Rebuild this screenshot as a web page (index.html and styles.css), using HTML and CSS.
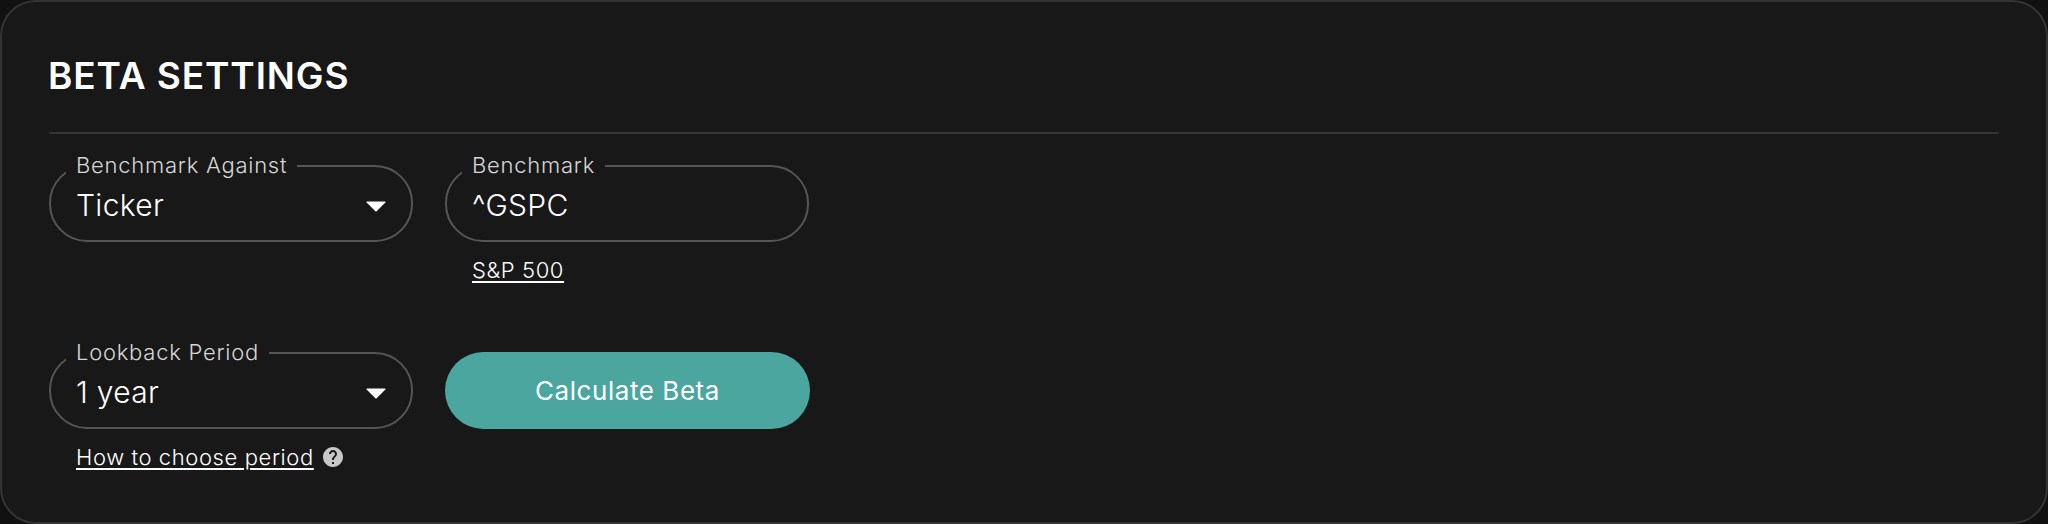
FILE: index.html
```html
<!DOCTYPE html>
<html lang="en">
<head>
<meta charset="utf-8">
<title>Beta Settings</title>
<link rel="stylesheet" href="styles.css">
</head>
<body>
<section class="card">
  <h2 class="title">BETA SETTINGS</h2>
  <hr class="divider">
  <div class="grid">
    <div class="cell">
      <fieldset class="field">
        <legend class="legend">Benchmark Against</legend>
        <div class="value-row">
          <span class="value">Ticker</span>
          <svg class="arrow" viewBox="0 0 20 11"><path d="M1 0.5h18a.6.6 0 0 1 .4 1L10.4 10.4a.6.6 0 0 1-.8 0L.6 1.5a.6.6 0 0 1 .4-1z"/></svg>
        </div>
      </fieldset>
    </div>
    <div class="cell">
      <fieldset class="field">
        <legend class="legend">Benchmark</legend>
        <div class="value-row"><span class="value">^GSPC</span></div>
      </fieldset>
      <div class="helper"><a class="link" href="#">S&amp;P 500</a></div>
    </div>
    <div class="cell">
      <fieldset class="field">
        <legend class="legend">Lookback Period</legend>
        <div class="value-row">
          <span class="value">1 year</span>
          <svg class="arrow" viewBox="0 0 20 11"><path d="M1 0.5h18a.6.6 0 0 1 .4 1L10.4 10.4a.6.6 0 0 1-.8 0L.6 1.5a.6.6 0 0 1 .4-1z"/></svg>
        </div>
      </fieldset>
      <div class="helper">
        <a class="link" href="#">How to choose period</a>
        <svg class="help" viewBox="2 2 20 20"><path d="M12 2C6.48 2 2 6.48 2 12s4.48 10 10 10 10-4.48 10-10S17.52 2 12 2zm1 17h-2v-2h2v2zm2.07-7.75l-.9.92C13.45 12.9 13 13.5 13 15h-2v-.5c0-1.1.45-2.1 1.17-2.83l1.24-1.26c.37-.36.59-.86.59-1.41 0-1.1-.9-2-2-2s-2 .9-2 2H8c0-2.21 1.79-4 4-4s4 1.79 4 4c0 .88-.36 1.68-.93 2.25z"/></svg>
      </div>
    </div>
    <div class="cell cell-button">
      <button class="button" type="button">Calculate Beta</button>
    </div>
  </div>
</section>
</body>
</html>
```
FILE: styles.css
```css
* { box-sizing: border-box; }
html, body { margin: 0; padding: 0; }
body {
  width: 2048px;
  height: 524px;
  background: #111;
  font-family: "Inter", "Noto Sans", sans-serif;
  font-weight: 300;
  color: #fff;
  overflow: hidden;
}
.card {
  width: 2048px;
  height: 524px;
  padding: 50px 47px 0;
  background: #181818;
  border: 2px solid #333;
  border-radius: 36px;
}
.title {
  margin: 0 0 0 -1px;
  font-size: 37px;
  line-height: 48px;
  font-weight: 600;
  letter-spacing: 0.9px;
}
.divider {
  height: 2px;
  margin: 32px 0 0;
  border: 0;
  background: #333;
}
.grid {
  display: grid;
  grid-template-columns: 364px 364px;
  grid-auto-rows: 187px;
  column-gap: 32px;
  margin-top: 20px;
}
.cell { min-width: 0; }
.cell-button { padding-top: 11px; }
.field {
  width: 100%;
  height: 88px;
  margin: 0;
  padding: 0 0 0 26px;
  border: 2px solid #555;
  border-radius: 38px;
  min-width: 0;
}
.legend {
  margin-left: -11px;
  padding: 0 10px 2px;
  font-size: 22px;
  line-height: 22px;
  letter-spacing: 0.75px;
  color: #d6d6d6;
}
.value-row {
  display: flex;
  align-items: center;
  justify-content: space-between;
  height: 40px;
  margin-top: 7px;
  padding-right: 25px;
}
.value {
  margin-left: -1px;
  font-size: 30px;
  line-height: 40px;
  letter-spacing: 0.3px;
}
.arrow { width: 20px; height: 11px; margin-top: 2px; fill: #fff; }
.helper {
  display: flex;
  align-items: center;
  gap: 9px;
  height: 28px;
  margin-top: 14px;
  padding-left: 27px;
  font-size: 22px;
  letter-spacing: 0.6px;
}
.link { color: #fff; text-decoration: underline; text-underline-offset: 3px; }
.help { width: 20px; height: 20px; fill: #c8c8c8; }
.button {
  display: block;
  width: 365px;
  height: 77px;
  border: 0;
  border-radius: 39px;
  background: #4ba69f;
  color: #fff;
  font-family: inherit;
  font-weight: 400;
  font-size: 26px;
  letter-spacing: 0.55px;
}
```
